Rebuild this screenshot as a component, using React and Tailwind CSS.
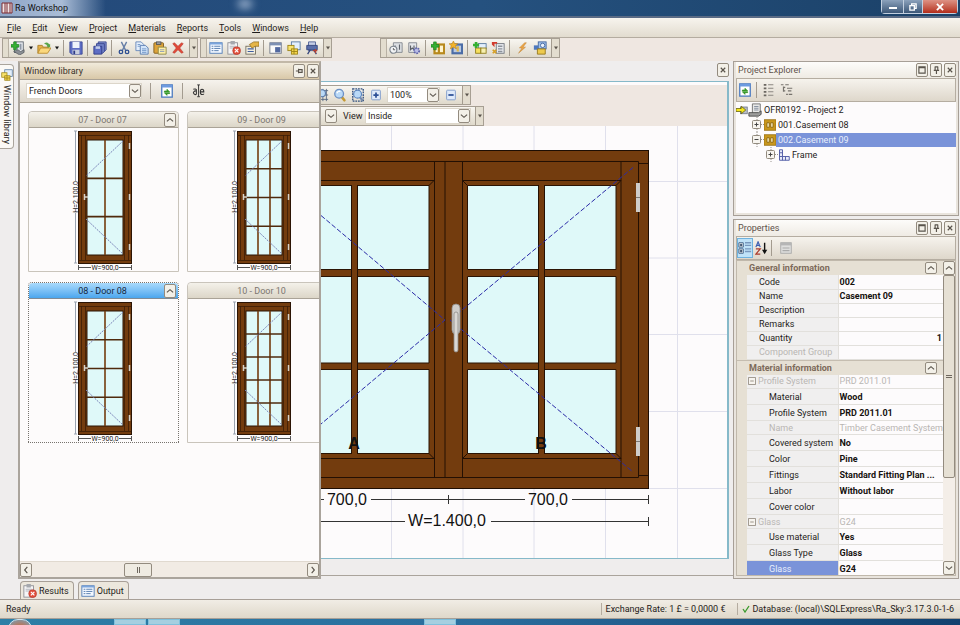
import React, { useState } from "react";

const ICONS = {
  newDoc: (
    <>
      <rect x="4" y="1" width="10" height="12" fill="#e9edf2" stroke="#59616b" />
      <path d="M6 4h2v6H6zM10 3h2v7h-2z" fill="#8e98a6" />
      <path d="M3 12l5-2 3 2 4-2v3l-5 3z" fill="#8b8f94" stroke="#484c52" strokeWidth=".7" />
      <path d="M0 4h3V1h3v3h3v3H6v3H3V7H0z" fill="#35b033" stroke="#167a1d" strokeWidth=".7" />
    </>
  ),
  open: (
    <>
      <path d="M1 14V5h5l1 2h6v3" fill="#e7b24a" stroke="#a87b21" />
      <path d="M1 14l3-6h12l-4 6z" fill="#fbd87d" stroke="#b98a2d" />
      <path d="M8 3q4-3 6 1l1-1v4h-4l1-1q-1-3-4-3z" fill="#5aa64a" />
    </>
  ),
  save: (
    <>
      <path d="M1 1h14v14H3l-2-2z" fill="#5d6dc4" stroke="#3a4796" />
      <rect x="4" y="1" width="8" height="7" fill="#eef3fb" />
      <rect x="4" y="10" width="8" height="5" fill="#c9cfdf" />
      <rect x="5" y="11" width="2" height="4" fill="#2e3a86" />
    </>
  ),
  saveAll: (
    <>
      <path d="M6 1h9v9l-2 2H6z" fill="#8191cf" stroke="#38458d" />
      <path d="M4 3h9v9l-2 2H4z" fill="#6f80c6" stroke="#38458d" />
      <path d="M1 6h9v9H1z" fill="#5d6dc4" stroke="#2e3a86" />
      <path d="M3 6h5v3H3z" fill="#c3cdea" />
    </>
  ),
  cut: (
    <>
      <path d="M5 1l5 10M11 1L6 11" stroke="#6880a8" strokeWidth="1.6" fill="none" />
      <circle cx="4.500" cy="12.500" r="2" fill="none" stroke="#2d4e91" strokeWidth="1.500" />
      <circle cx="11.500" cy="12.500" r="2" fill="none" stroke="#2d4e91" strokeWidth="1.500" />
    </>
  ),
  copy: (
    <>
      <path d="M1 1h6l3 3v7H1z" fill="#e4effc" stroke="#6485b7" />
      <path d="M6 5h6l3 3v7H6z" fill="#d3e5fa" stroke="#5577ad" />
      <path d="M8 9h5M8 11h5M8 13h5M3 4h3M3 6h3" stroke="#6d92c6" />
    </>
  ),
  paste: (
    <>
      <rect x="1" y="2" width="11" height="12" rx="1" fill="#dda43a" stroke="#7d5a1c" />
      <rect x="4" y="1" width="5" height="3" fill="#9b9da2" stroke="#55575b" />
      <path d="M6 7h9v8H6z" fill="#fff0a8" stroke="#8c8647" />
      <path d="M8 10h5M8 12h5" stroke="#8a9ab8" />
    </>
  ),
  remove: (
    <path d="M2 3l2-1 4 4 4-4 2 1-4 5 4 5-2 1-4-4-4 4-2-1 4-5z" fill="#e04a3a" stroke="#b5342a" strokeWidth=".6" />
  ),
  output: (
    <>
      <rect x="1" y="2" width="14" height="12" fill="#f3f8ff" stroke="#4a78b5" />
      <path d="M1 2h14v2H1z" fill="#7ba5dc" />
      <path d="M3 6h2M3 8.500h2M3 11h2M6 6h7M6 8.500h7M6 11h5" stroke="#4972a8" />
    </>
  ),
  results: (
    <>
      <rect x="1" y="2" width="11" height="13" fill="#f5f5f7" stroke="#8c8d93" />
      <rect x="4" y="0" width="5" height="4" fill="#a5a8ae" />
      <path d="M3 6h7M3 8h5" stroke="#a9adb6" />
      <circle cx="11" cy="11" r="4.500" fill="#e2503c" stroke="#a82b1e" strokeWidth=".6" />
      <path d="M9 9l4 4M13 9l-4 4" stroke="#fff" strokeWidth="1.300" />
    </>
  ),
  props: (
    <>
      <rect x="1" y="6" width="11" height="9" fill="#f3efe1" stroke="#716c5c" />
      <path d="M3 9h7M3 12h7" stroke="#3f5ea0" strokeWidth="1.400" />
      <path d="M5 4l5-3h6v5h-4L8 8z" fill="#e5b548" stroke="#8b6719" strokeWidth=".8" />
    </>
  ),
  panelWin: (
    <>
      <rect x="1" y="2" width="13" height="12" fill="#fbfbfb" stroke="#6e7686" />
      <path d="M1 2h13v3H1z" fill="#7d90b4" />
      <rect x="7" y="7" width="6" height="6" fill="#5269a0" />
    </>
  ),
  library: (
    <>
      <rect x="5" y="1" width="10" height="9" fill="#e3effc" stroke="#54779e" />
      <rect x="1" y="5" width="7" height="6" fill="#f9e36d" stroke="#9b8214" />
      <rect x="5" y="9" width="7" height="6" fill="#f5d64d" stroke="#9b8214" />
      <path d="M8 9v6M5 12h7" stroke="#9b8214" />
    </>
  ),
  fittings: (
    <>
      <path d="M4 1h8v10H4z" fill="#c6cfe6" stroke="#4b5f94" />
      <path d="M2 5h12v5H2z" fill="#5a6faa" stroke="#34457c" />
      <path d="M3 15l3-5M13 15l-3-5" stroke="#34457c" strokeWidth="1.500" />
      <path d="M9 11h5M12 9v5" stroke="#b54334" strokeWidth="1.500" />
    </>
  ),
  clockDoc: (
    <>
      <path d="M5 2h10v11H5z" fill="#dde0e4" stroke="#7f848b" />
      <path d="M7 5v5l2-2M12 4v6" stroke="#5c6169" fill="none" strokeWidth="1.300" />
      <circle cx="5" cy="10" r="4" fill="#f2f4f6" stroke="#7d858e" strokeWidth="1.300" />
      <path d="M5 8v2h2" stroke="#555" fill="none" />
    </>
  ),
  gearDoc: (
    <>
      <path d="M2 2h9v11H2z" fill="#e4e6e9" stroke="#7f848b" />
      <path d="M4 5v5l2-2 2 2V5" stroke="#5c6169" fill="none" strokeWidth="1.300" />
      <circle cx="11" cy="11" r="3" fill="#b9bce6" stroke="#6065a8" strokeWidth="2" strokeDasharray="2 1" />
    </>
  ),
  addWindow: (
    <>
      <rect x="4" y="4" width="11" height="10" fill="#fff4ce" stroke="#b8891c" strokeWidth="2.500" />
      <path d="M9 4v10" stroke="#b8891c" strokeWidth="2.500" />
      <path d="M0 4h3V1h3v3h3v3H6v3H3V7H0z" fill="#35b033" stroke="#167a1d" strokeWidth=".7" />
    </>
  ),
  starWindow: (
    <>
      <rect x="4" y="4" width="11" height="10" fill="#b9c9e2" stroke="#4c6da6" strokeWidth="2.500" />
      <path d="M10 6v6" stroke="#dfb64a" strokeWidth="2.500" />
      <path d="M5 0l1.500 3H10L7.500 5.500l1 3.500L5 7 1.500 9l1-3.500L0 3h3.500z" fill="#f2b42c" stroke="#b6790c" strokeWidth=".6" />
    </>
  ),
  addBlocks: (
    <>
      <rect x="6" y="3" width="9" height="6" fill="#e3effc" stroke="#54779e" />
      <rect x="3" y="8" width="6" height="6" fill="#f7e05f" stroke="#8f7b17" />
      <rect x="9" y="8" width="6" height="6" fill="#f7f0b0" stroke="#8f7b17" />
      <path d="M0 3h2V1h3v2h2v3H5v2H2V6H0z" fill="#35b033" />
    </>
  ),
  swapDoc: (
    <>
      <rect x="6" y="3" width="9" height="11" fill="#e8eaee" stroke="#6f747c" />
      <path d="M8 6h5M8 9h5M8 12h5" stroke="#8c929b" strokeWidth="1.500" />
      <path d="M1 1h6v2H4v4l-3-3z" fill="#d23a2d" />
      <path d="M2 10l4 4M6 10l-4 4" stroke="#d7a026" strokeWidth="2" />
    </>
  ),
  bolt: <path d="M11 2L5 8h3l-4 6 8-7H9l4-5z" fill="#eda646" stroke="#b87a2b" strokeWidth=".5" />,
  cubes: (
    <>
      <rect x="6" y="1" width="9" height="8" fill="#9fc0ec" stroke="#41649c" />
      <circle cx="11" cy="5" r="2.500" fill="#e9f1fb" stroke="#41649c" />
      <rect x="1" y="5" width="5" height="5" fill="#4d78be" />
      <path d="M5 9h9v6H5z" fill="#edca4d" stroke="#94761a" />
    </>
  ),
  refresh: (
    <>
      <rect x="2" y="1" width="12" height="14" fill="#fff" stroke="#4e7cc0" strokeWidth="1.500" />
      <path d="M2 1h12v3H2z" fill="#6d9be0" />
      <path d="M5 8h3V6l3 3H5zM11 11H8v2l-3-3h6z" fill="#3ca52b" stroke="#2f8f22" strokeWidth=".8" />
    </>
  ),
  zoomHash: (
    <>
      <path d="M1 3h14M1 8h14M1 13h14M4 1v14M9 1v14M13 1v14" stroke="#53657f" />
      <circle cx="8" cy="6" r="4" fill="#b9d9f7" stroke="#5c7cab" strokeWidth="1.300" />
    </>
  ),
  zoom: (
    <>
      <path d="M9 9l4 5" stroke="#c59a35" strokeWidth="3" strokeLinecap="round" />
      <circle cx="7" cy="6.500" r="5" fill="#b9d9f7" stroke="#6a8fc4" strokeWidth="1.500" />
      <path d="M4.500 6q1-3 4-2" stroke="#fff" fill="none" strokeWidth="1.500" />
    </>
  ),
  zoomArea: (
    <>
      <rect x="2" y="1" width="12" height="14" fill="none" stroke="#31507f" strokeDasharray="2 1" strokeWidth="1.500" />
      <path d="M9 9l4 5" stroke="#7389ad" strokeWidth="2.500" />
      <circle cx="7.500" cy="7" r="4.500" fill="#b9d9f7" stroke="#5a83bd" strokeWidth="1.300" />
    </>
  ),
  plusBox: (
    <>
      <rect x="3" y="2.500" width="10" height="11" rx="1" fill="#dfeafa" stroke="#7a98c9" />
      <path d="M5 8h6M8 5v6" stroke="#2c4f96" strokeWidth="2" />
    </>
  ),
  minusBox: (
    <>
      <rect x="3" y="2.500" width="10" height="11" rx="1" fill="#dfeafa" stroke="#7a98c9" />
      <path d="M5 8h6" stroke="#2c4f96" strokeWidth="2" />
    </>
  ),
  expandAll: (
    <>
      <path d="M2 2h3M2 6h3M2 10h3M2 14h3" stroke="#6b6761" strokeWidth="2" />
      <path d="M7 2h6M7 6h6M7 10h6M7 14h6" stroke="#8b8781" strokeWidth="1.400" />
    </>
  ),
  collapseAll: (
    <path d="M1 2h3M6 2h4M4 5h2M8 6h6M4 9h2M9 9h4M7 13h2M10 13h4M4 4v6" stroke="#77736d" strokeWidth="1.400" fill="none" />
  ),
  categorized: (
    <>
      <path d="M1 2h5v5H1zM1 9h5v5H1z" fill="#fff" stroke="#34557d" />
      <path d="M2 4.500h3M2 11.500h3M3.500 3v3M3.500 10v3" stroke="#16304f" strokeWidth="1.200" />
      <path d="M8 2h7M8 5h7M8 9h7M8 12h7" stroke="#7897bd" strokeWidth="1.500" />
    </>
  ),
  sort: (
    <>
      <path d="M1 7l2.500-6L6 7M2 5h3" stroke="#3d5fb2" fill="none" strokeWidth="1.400" />
      <path d="M1 9h5l-5 6h5" stroke="#ab3a2c" fill="none" strokeWidth="1.400" />
      <path d="M11 2v9" stroke="#111" strokeWidth="1.600" />
      <path d="M8 10h6l-3 5z" fill="#111" />
    </>
  ),
  pages: (
    <>
      <rect x="2" y="2" width="12" height="12" fill="#dededd" stroke="#a5a5a5" />
      <path d="M2 2h12v3H2z" fill="#b5b5b5" />
      <path d="M4 8h8M4 11h8" stroke="#aaa" strokeWidth="1.400" />
    </>
  ),
  rename: (
    <>
      <path d="M6 1h1.500M9 1H7.500v13M6 14.500h3" stroke="#222" fill="none" />
      <path d="M5 6v6M5 8.500a2 2 0 1 0 0 3M1.500 6q3-1 3.500 1M9.500 9h4q0-3-2-3t-2 3 2 3 2-1" stroke="#333" fill="none" strokeWidth="1.200" />
    </>
  ),
  casement: (
    <>
      <rect x="0" y="1" width="16" height="14" fill="#c8971d" stroke="#93690c" />
      <path d="M4 5h3v6H4zM9 5h3v6H9z" fill="#fff2c2" stroke="#7c5707" />
    </>
  ),
  frame: (
    <path d="M2 1h4v9h9v5H2zM2 5h4M2 10h4v5M10 10v5" fill="#e8ebfa" stroke="#4a55a2" strokeWidth="1.200" />
  ),
  projectNode: (
    <>
      <path d="M5 1h9v11H5z" fill="#e8e8e8" stroke="#6b6b6b" />
      <path d="M7 4h5M7 6h5M7 8h5" stroke="#7c8798" />
      <path d="M1 11h11l3-2v4l-3 2H1z" fill="#9c9c9c" stroke="#4b4b4b" />
    </>
  ),
  arrowNode: (
    <>
      <rect x="6" y="4" width="9" height="9" fill="#b9bec9" stroke="#6b7180" />
      <path d="M0 6h7V3l6 5-6 5v-3H0z" fill="#f4e51c" stroke="#5f5909" />
    </>
  ),
};

const Icon = ({ name, className = "w-3.5 h-3.5" }) => (
  <svg viewBox="0 0 16 16" className={`${className} shrink-0`} aria-hidden="true">
    {ICONS[name]}
  </svg>
);

const GLYPHS = {
  close: "M2 2l5 5M7 2L2 7",
  up: "M1 6l3.500-3L8 6",
  down: "M1 3l3.500 3L8 3",
  left: "M6 1L3 4.500 6 8",
  right: "M3 1l3 3.500L3 8",
  pin: "M3 1h4M3.500 1v4M6.500 1v4M2 5h6M5 5v4",
  pinSide: "M1 4.500h3M4 2v5M4 3h4v3H4",
  max: "M1 1h7v7H1zM1 2h7",
};

const BoxButton = ({ glyph, label, className = "w-3 h-3.5" }) => (
  <button
    aria-label={label}
    className={`${className} flex shrink-0 items-center justify-center rounded-xs border border-[#938b7f] bg-[#f3f0e8] hover:bg-white`}
  >
    <svg viewBox="0 0 9 9" className="w-2 h-2 shrink-0">
      <path d={GLYPHS[glyph]} fill="none" stroke="#5a544c" strokeWidth="1.300" />
    </svg>
  </button>
);

const Separator = () => <span className="w-0.5 h-4 shrink-0 border-l border-[#a39b8f]" />;

const Overflow = () => (
  <button
    aria-label="More buttons"
    className="w-2 shrink-0 self-stretch flex items-center justify-center border-l border-[#a39b8f] bg-[#e3ddcf]"
  >
    <svg viewBox="0 0 4 3" className="w-1 h-1">
      <path d="M0 0h4L2 3z" fill="#5a544c" />
    </svg>
  </button>
);

const Toolbar = ({ label, items }) => (
  <div
    role="toolbar"
    aria-label={label}
    className="flex h-5 items-center border border-[#a79f93] bg-linear-to-b from-[#f8f6f1] to-[#dfd9cb]"
  >
    <span className="w-1.5 shrink-0 self-stretch border-r border-[#b9b1a4] bg-[#e3ddcf]" />
    <div className="flex items-center gap-1 pl-0.5 pr-1">
      {items.map((item, index) => {
        if (item === "|") return <Separator key={index} />;
        if (item === "v")
          return (
            <svg key={index} viewBox="0 0 4 3" className="w-1 h-1">
              <path d="M0 0h4L2 3z" fill="#111" />
            </svg>
          );
        return (
          <button key={index} aria-label={item}>
            <Icon name={item} />
          </button>
        );
      })}
    </div>
    <Overflow />
  </div>
);

const Combo = ({ label, options, className }) => (
  <div className={`${className} flex h-4 items-center border border-[#dcd6ca] bg-white`}>
    <select
      aria-label={label}
      className="h-full min-w-0 flex-1 appearance-none bg-transparent pl-0.5 leading-3 outline-none"
    >
      {options.map((option) => (
        <option key={option}>{option}</option>
      ))}
    </select>
    <span className="pointer-events-none flex h-3.5 w-3 items-center justify-center rounded-xs border border-[#938b7f] bg-[#f3f0e8]">
      <svg viewBox="0 0 9 9" className="h-2 w-2 shrink-0">
        <path d={GLYPHS.down} fill="none" stroke="#5a544c" strokeWidth="1.300" />
      </svg>
    </span>
  </div>
);

const PanelTitle = ({ children }) => (
  <div className="flex h-4 items-center gap-0.5 bg-linear-to-b from-[#fdfcfa] to-[#efebe4] pl-0.5 text-[#5f5149]">
    <h2 className="flex-1">{children}</h2>
    <BoxButton glyph="max" label="Maximize" />
    <BoxButton glyph="pin" label="Pin" />
    <BoxButton glyph="close" label="Close" />
  </div>
);

// Small preview of a door with its height and width dimensions
const DoorPreview = ({ cols, rows }) => {
  const colWidth = 36 / cols;
  const rowHeight = 115 / rows;
  const vertical = Array.from({ length: cols - 1 }, (_, i) => 15 + colWidth * (i + 1));
  const horizontal = Array.from({ length: rows - 1 }, (_, i) => 10 + rowHeight * (i + 1));
  return (
    <svg width="60" height="141" className="mr-1">
      <rect x="6.500" y="1.500" width="53" height="132" fill="#733c0e" stroke="#2b1404" />
      <path d="M6 5.500h53M6 130.500h53M9.500 5v125M13.500 5v125M52.500 5v125M56.500 5v125" stroke="#3c1d06" strokeWidth=".8" />
      <rect x="15" y="10" width="36" height="115" fill="#dff9f9" stroke="#2b1404" />
      {vertical.map((x) => (
        <path key={x} d={`M${x} 10v115`} stroke="#733c0e" strokeWidth="1.600" />
      ))}
      {horizontal.map((y) => (
        <path key={y} d={`M15 ${y}h36`} stroke="#4f2a0d" strokeWidth="1.600" />
      ))}
      <path d="M51 11L14 46M14 89l37 35" stroke="#7a83b8" strokeDasharray="2 1" />
      <path d="M57.500 13v6M57.500 64v6M57.500 114v6M12.500 64v6M12 67h4" stroke="#d8d2c8" strokeWidth="1.500" />
      <path d="M3.500 1v50M3.500 83v50M2 1h3M2 133h3" stroke="#9aa3b0" />
      <path d="M7 137.500h12M47 137.500h12M6.500 135v5M59.500 135v5" stroke="#555" />
      <text x="33" y="140" fontSize="7" textAnchor="middle" fill="#222">
        W=900,0
      </text>
      <text transform="translate(6 67) rotate(-90)" fontSize="7" textAnchor="middle" fill="#222">
        H=2.100,0
      </text>
    </svg>
  );
};

const DOORS = [
  { id: "07 - Door 07", cols: 2, rows: 3 },
  { id: "09 - Door 09", cols: 3, rows: 4 },
  { id: "08 - Door 08", cols: 2, rows: 4 },
  { id: "10 - Door 10", cols: 3, rows: 5 },
];

const DoorCard = ({ door, selected, onSelect }) => (
  <div
    onClick={onSelect}
    className={
      selected
        ? "rounded-t-sm border border-dotted border-[#77736d]"
        : "rounded-t-sm border border-[#c9c4bb]"
    }
  >
    <div
      className={
        selected
          ? "flex h-4 items-center rounded-t-sm border-b border-[#7f8b96] bg-linear-to-b from-[#a9dafc] to-[#4aa6ee] pl-3 text-[#16283f]"
          : "flex h-4 items-center rounded-t-sm border-b border-[#aaa397] bg-linear-to-b from-[#f4f1ea] to-[#dcd6c8] pl-3 text-[#7c7670]"
      }
    >
      <h3 className="flex-1 text-center">{door.id}</h3>
      <BoxButton glyph="up" label="Collapse" className="w-3 h-3.5 mr-0.5" />
    </div>
    <div className="flex justify-center pt-0.5">
      <DoorPreview cols={door.cols} rows={door.rows} />
    </div>
  </div>
);

const WindowLibrary = () => {
  const [selected, setSelected] = useState("08 - Door 08");
  return (
    <section className="flex w-[303px] shrink-0 flex-col border-2 border-[#aaa49c] border-t-[#c2b8a8] bg-[#fdfbfb]">
      <div className="flex h-4 items-center gap-0.5 bg-linear-to-b from-[#f1eadb] to-[#d9c8a8] pl-1 text-[#3a322a]">
        <h2 className="flex-1">Window library</h2>
        <BoxButton glyph="pinSide" label="Pin" />
        <BoxButton glyph="close" label="Close" />
      </div>
      <div className="flex h-6 items-center gap-2 border-y border-[#aaa295] bg-linear-to-b from-[#f6f3ed] to-[#ded7cb] px-1.5">
        <Combo label="Library" options={["French Doors"]} className="w-[116px]" />
        <Separator />
        <button aria-label="Refresh">
          <Icon name="refresh" />
        </button>
        <Separator />
        <button aria-label="Rename">
          <Icon name="rename" />
        </button>
      </div>
      <div className="min-h-0 flex-1 overflow-hidden pl-2 pt-2">
        <div className="grid w-[310px] grid-cols-2 gap-x-2 gap-y-2.5">
          {DOORS.map((door) => (
            <DoorCard
              key={door.id}
              door={door}
              selected={selected === door.id}
              onSelect={() => setSelected(door.id)}
            />
          ))}
        </div>
      </div>
      <div className="flex h-4 items-center border-t border-[#e0d9cf] bg-[#f1ebe4]">
        <BoxButton glyph="left" label="Scroll left" />
        <div className="flex flex-1 pl-[92px]">
          <span className="flex h-3.5 w-7 items-center justify-center gap-px rounded-xs border border-[#938b7f] bg-[#efebe2]">
            <i className="h-1.5 w-px bg-[#6f685f]" />
            <i className="h-1.5 w-px bg-[#6f685f]" />
          </span>
        </div>
        <BoxButton glyph="right" label="Scroll right" />
      </div>
    </section>
  );
};

const Dimension = ({ d }) => <path d={d} stroke="#333" fill="none" />;

const Drawing = () => (
  <svg className="h-full w-full" role="img" aria-label="Casement 09">
    <g transform="translate(-321 -126)">
      <path
        d="M391.500 126v432M463 126v432M534 126v432M605.500 126v432M677.500 126v432M321 181.500h407M321 258h407M321 334.500h407M321 411.500h407M321 488.500h407"
        stroke="#e0e0ec"
      />
      <rect x="310" y="150.500" width="338.500" height="338" fill="#733c0e" stroke="#1e0e03" />
      <g fill="#dff9f9" stroke="#2b1404">
        <path d="M310 185.500h41.500v84H310zM357.500 185.500H429v84h-71.500zM467.500 185.500h71v84h-71zM544.500 185.500H616v84h-71.500z" />
        <path d="M310 276.500h41.500V363H310zM357.500 276.500H429V363h-71.500zM467.500 276.500h71V363h-71zM544.500 276.500H616V363h-71.500z" />
        <path d="M310 369.500h41.500v84H310zM357.500 369.500H429v84h-71.500zM467.500 369.500h71v84h-71zM544.500 369.500H616v84h-71.500z" />
      </g>
      <path
        d="M310 161.500h328.500M310 477.500h328.500M310 180.500h124M310 458.500h124M462.500 180.500H621M462.500 458.500H621M434.500 161.500v316M445 161.500v316M462.500 161.500v316M621 161.500v316M638.500 161.500v316M638.500 163.500h10M638.500 475.500h10M429 185.500l5-5M429 453.500l5 5M467.500 185.500l-5-5M467.500 453.500l-5 5M616 185.500l5-5M616 453.500l5 5M351.500 185v269M357.500 185v269M538.500 185v269M544.500 185v269"
        stroke="#241003"
        fill="none"
      />
      <path d="M633 167.500L450 320l183 152M321 215.500L445 320 321 424" stroke="#2b2ba8" strokeDasharray="5 2" fill="none" />
      <rect x="452" y="304" width="8" height="30" rx="4" fill="#cfcdca" stroke="#8d8a86" strokeWidth=".8" />
      <rect x="454" y="312" width="4" height="40" rx="2" fill="#dad8d5" stroke="#8d8a86" strokeWidth=".8" />
      <path d="M638 183v29M638 427v29" stroke="#cfcdca" strokeWidth="4" />
      <path d="M636 197.500h4M636 441.500h4" stroke="#7d7975" />
      <g fontSize="16" fill="#111" textAnchor="middle" fontFamily="Liberation Sans, sans-serif">
        <text x="354" y="449" fontWeight="bold">
          A
        </text>
        <text x="541" y="449" fontWeight="bold">
          B
        </text>
        <text x="347" y="505">
          700,0
        </text>
        <text x="548" y="505">
          700,0
        </text>
        <text x="447" y="526">
          W=1.400,0
        </text>
      </g>
      <Dimension d="M321 499.500h3M371 499.500h154M572 499.500h77M448.500 495v9M648.500 495v9" />
      <Dimension d="M321 521.500h84M491 521.500h158M648.500 517v9" />
    </g>
  </svg>
);

const Workspace = () => (
  <main className="flex min-w-0 flex-1 flex-col border-b border-[#aaa49c] mb-[3px]">
    <div className="flex h-5 shrink-0 items-start justify-end bg-[#efeded] px-1 pt-0.5">
      <BoxButton glyph="close" label="Close document" />
    </div>
    <div className="mr-1 mb-4 flex min-h-0 flex-1 flex-col border-y border-r-2 border-[#86b9c9] bg-[#fdfbfc]">
      <div className="mt-[3px] flex shrink-0 flex-col items-start bg-[#efe7e1]">
        <div className="flex h-5 items-center gap-1 border border-l-0 border-[#a79f93] bg-linear-to-b from-[#f8f6f1] to-[#dfd9cb]">
          <button aria-label="Fit" className="flex w-2 justify-end overflow-hidden">
            <Icon name="zoomHash" />
          </button>
          <button aria-label="Zoom">
            <Icon name="zoom" />
          </button>
          <button aria-label="Zoom area">
            <Icon name="zoomArea" />
          </button>
          <button aria-label="Zoom in">
            <Icon name="plusBox" />
          </button>
          <Combo label="Zoom level" options={["100%"]} className="w-[53px]" />
          <button aria-label="Zoom out">
            <Icon name="minusBox" />
          </button>
          <Overflow />
        </div>
        <div className="mt-px flex h-5 items-center gap-1 border border-l-0 border-[#a79f93] bg-linear-to-b from-[#f8f6f1] to-[#dfd9cb]">
          <BoxButton glyph="down" label="Open list" className="ml-1 w-3 h-3.5" />
          <span className="w-5 pl-0.5">View</span>
          <Combo label="View" options={["Inside"]} className="w-[106px]" />
          <Overflow />
        </div>
      </div>
      <div className="min-h-0 flex-1">
        <Drawing />
      </div>
    </div>
  </main>
);

const TreeToggle = ({ open }) => (
  <svg viewBox="0 0 14 15" className="h-[15px] w-3.5 shrink-0">
    <path d="M7 0v15M7 7.500h7" stroke="#9a958f" strokeDasharray="1 1" />
    <rect x="2.500" y="3.500" width="8" height="8" rx="1" fill="#f7f4ef" stroke="#938b7f" />
    <path d={open ? "M4.500 7.500h4" : "M4.500 7.500h4M6.500 5.500v4"} stroke="#444" />
  </svg>
);

const ProjectExplorer = () => (
  <section className="flex h-[155px] shrink-0 flex-col border border-[#a79f97] bg-[#e9e4dd] p-0.5 pt-0">
    <PanelTitle>Project Explorer</PanelTitle>
    <div className="flex h-6 shrink-0 items-center gap-1 border border-[#b5ada1] bg-linear-to-b from-[#f6f3ed] to-[#ded7cb] px-px">
      <button aria-label="Refresh">
        <Icon name="refresh" />
      </button>
      <Separator />
      <button aria-label="Expand all">
        <Icon name="expandAll" />
      </button>
      <button aria-label="Collapse all">
        <Icon name="collapseAll" />
      </button>
    </div>
    <ul className="flex-1 bg-[#fdfbfc] text-[#1f1c1a]">
      <li className="flex h-[15px] items-center">
        <Icon name="arrowNode" className="h-3.5 w-3" />
        <Icon name="projectNode" />
        <span className="pl-0.5">OFR0192 - Project 2</span>
      </li>
      <li className="flex h-[15px] items-center pl-3.5">
        <TreeToggle />
        <Icon name="casement" className="h-3.5 w-3" />
        <span className="pl-0.5">001.Casement 08</span>
      </li>
      <li className="flex h-[15px] items-center pl-3.5">
        <TreeToggle open />
        <Icon name="casement" className="h-3.5 w-3" />
        <span className="flex-1 bg-[#7a93d9] pl-0.5 leading-[14px] text-[#e9effc]">002.Casement 09</span>
      </li>
      <li className="flex h-[15px] items-center pl-7">
        <TreeToggle />
        <Icon name="frame" className="h-3.5 w-3" />
        <span className="pl-0.5">Frame</span>
      </li>
    </ul>
  </section>
);

const GENERAL = [
  ["Code", "002"],
  ["Name", "Casement 09"],
  ["Description", ""],
  ["Remarks", ""],
  ["Quantity", "1", "right"],
  ["Component Group", "", "muted"],
];

const MATERIAL = [
  ["Profile System", "PRD 2011.01", "group"],
  ["Material", "Wood"],
  ["Profile System", "PRD 2011.01"],
  ["Name", "Timber Casement System", "muted"],
  ["Covered system", "No"],
  ["Color", "Pine"],
  ["Fittings", "Standard Fitting Plan ..."],
  ["Labor", "Without labor"],
  ["Cover color", ""],
  ["Glass", "G24", "group"],
  ["Use material", "Yes"],
  ["Glass Type", "Glass"],
  ["Glass", "G24", "selected"],
];

const PropertyGroup = ({ title, rows, nested }) => (
  <div className="border-b border-[#c5bdb0]">
    <div className="flex h-3.5 items-center pl-3 pr-1.5">
      <h3 className="flex-1 font-bold text-[#7c6a5a]">{title}</h3>
      <BoxButton glyph="up" label="Collapse" className="w-3 h-3" />
    </div>
    <div className="pl-2.5">
      <table className="w-full table-fixed border-collapse">
        <tbody>
          {rows.map(([name, value, kind], index) => {
            const faded = kind === "muted" || kind === "group";
            const tall = nested && !faded;
            return (
              <tr key={index} className={tall ? "h-4" : "h-3.5"}>
                <th
                  scope="row"
                  className={`w-[91px] whitespace-nowrap border-b border-[#e2e0dc] p-0 text-left font-normal leading-3 ${
                    kind === "selected"
                      ? "bg-[#7a93d9] text-[#e9effc]"
                      : faded
                        ? "bg-[#f0efef] text-[#b9b6b3]"
                        : "bg-[#f0efef] text-[#1f1c1a]"
                  }`}
                >
                  {kind === "group" ? (
                    <span className="flex items-center gap-0.5 pl-px">
                      <svg viewBox="0 0 9 9" className="h-2 w-2">
                        <path d="M.5.5h8v8h-8zM2.500 4.500h4" fill="#f7f4ef" stroke="#938b7f" />
                      </svg>
                      {name}
                    </span>
                  ) : (
                    <span className={nested ? "pl-[22px]" : "pl-3"}>{name}</span>
                  )}
                </th>
                <td
                  className={`whitespace-nowrap border-b border-l border-[#e2e0dc] bg-[#fdfbfc] p-0 px-px leading-3 ${
                    faded ? "text-[#b9b6b3]" : "font-bold text-[#16120f]"
                  } ${kind === "right" ? "text-right" : ""}`}
                >
                  {value}
                </td>
              </tr>
            );
          })}
        </tbody>
      </table>
    </div>
  </div>
);

const Properties = () => (
  <section className="flex min-h-0 flex-1 flex-col border border-[#a79f97] bg-[#e9e4dd] p-0.5 pt-0">
    <PanelTitle>Properties</PanelTitle>
    <div className="flex h-6 shrink-0 items-center gap-0.5 border border-[#b5ada1] bg-linear-to-b from-[#f6f3ed] to-[#ded7cb]">
      <button aria-label="Categorized" className="border border-[#6fb2de] bg-[#bfe2f8] py-0.5">
        <Icon name="categorized" />
      </button>
      <button aria-label="Alphabetical">
        <Icon name="sort" />
      </button>
      <Separator />
      <button aria-label="Property pages" className="pl-1">
        <Icon name="pages" />
      </button>
    </div>
    <div className="flex min-h-0 flex-1 border border-[#c0b8ab]">
      <div className="min-w-0 flex-1 overflow-hidden bg-[#e6e0d4]">
        <PropertyGroup title="General information" rows={GENERAL} />
        <PropertyGroup title="Material information" rows={MATERIAL} nested />
      </div>
      <div className="flex w-3 flex-col items-center bg-[#f4eee8]">
        <BoxButton glyph="up" label="Scroll up" />
        <div className="flex min-h-0 w-3 flex-1 flex-col">
          <span className="flex basis-[71%] flex-col items-center justify-center gap-px rounded-xs border border-[#938b7f] bg-[#e6e0d4]">
            <i className="h-px w-1.5 bg-[#6f685f]" />
            <i className="h-px w-1.5 bg-[#6f685f]" />
          </span>
        </div>
        <BoxButton glyph="down" label="Scroll down" />
      </div>
    </div>
  </section>
);

const TitleBar = () => (
  <header className="flex h-[18px] shrink-0 items-start justify-between border-b-2 border-[#5a6b85] bg-linear-to-r from-[#24497a] via-[#25517f] to-[#1b4168]">
    <div className="flex h-full flex-1 items-center gap-0.5 bg-linear-to-r from-[#8fa6c8] via-[#a9bcd6] via-7% to-transparent to-12% pl-px text-[#111]">
      <svg viewBox="0 0 12 12" className="h-3 w-3">
        <path d="M1 1h10v10H1z" fill="#f2e6e6" stroke="#7b2b32" />
        <path d="M4 1v10M6 1v10M9 1v10" stroke="#7b2b32" />
      </svg>
      <h1>Ra Workshop</h1>
      <span className="ml-[168px] h-2 w-3.5 self-start rounded-full bg-[#a9bcd6] blur-xs" />
    </div>
    <div className="mr-0.5 flex h-3.5 rounded-b-sm border border-t-0 border-[#c2cfdf] text-white">
      <button aria-label="Minimize" className="flex w-[21px] items-end justify-center bg-linear-to-b from-[#8ba1bb] to-[#3d5878] pb-1">
        <span className="h-0.5 w-2 bg-white" />
      </button>
      <button aria-label="Restore" className="flex w-5 items-center justify-center border-x border-[#c2cfdf] bg-linear-to-b from-[#8ba1bb] to-[#3d5878]">
        <svg viewBox="0 0 9 9" className="h-2 w-2">
          <path d="M3 3V1h5v5H6M1 3h5v5H1z" fill="none" stroke="#fff" strokeWidth="1.500" />
        </svg>
      </button>
      <button aria-label="Close" className="flex w-[34px] items-center justify-center bg-linear-to-b from-[#dd9184] to-[#b32a18]">
        <svg viewBox="0 0 9 9" className="h-2 w-2">
          <path d="M1 1l7 7M8 1L1 8" stroke="#fff" strokeWidth="2" />
        </svg>
      </button>
    </div>
  </header>
);

const MENU = ["File", "Edit", "View", "Project", "Materials", "Reports", "Tools", "Windows", "Help"];

const App = () => {
  return (
    <div className="flex h-screen w-full flex-col overflow-hidden bg-[#efeded] font-[Roboto,'Liberation_Sans',sans-serif] text-[9px] leading-3 text-[#1f1c1a]">
      <TitleBar />
      <nav className="flex h-5 shrink-0 items-center gap-[11px] border-b border-[#b4aca0] bg-linear-to-b from-[#f7f4ee] to-[#e2dccf] px-[7px]">
        {MENU.map((item) => (
          <button key={item}>
            <span className="underline">{item[0]}</span>
            {item.slice(1)}
          </button>
        ))}
      </nav>
      <div className="flex h-[23px] shrink-0 items-start gap-0.5 bg-[#efe7e1] pl-0.5">
        <Toolbar
          label="Standard"
          items={["newDoc", "v", "open", "v", "|", "save", "|", "saveAll", "|", "cut", "copy", "paste", "remove"]}
        />
        <Toolbar label="Panels" items={["output", "results", "props", "|", "panelWin", "library", "fittings"]} />
        <div className="pl-[46px]">
          <Toolbar
            label="Items"
            items={["clockDoc", "gearDoc", "|", "addWindow", "starWindow", "|", "addBlocks", "swapDoc", "|", "bolt", "cubes"]}
          />
        </div>
      </div>
      <div className="flex min-h-0 flex-1">
        <aside className="w-[18px] shrink-0 pt-[3px]">
          <button className="flex w-3.5 flex-col items-center gap-1 rounded-r-sm border border-l-0 border-[#aaa49c] bg-[#fbf9f6] py-1">
            <Icon name="library" className="h-3 w-3" />
            <span className="[writing-mode:vertical-rl]">Window library</span>
          </button>
        </aside>
        <WindowLibrary />
        <Workspace />
        <aside className="flex w-[227px] shrink-0 flex-col gap-[3px] pr-px">
          <ProjectExplorer />
          <Properties />
        </aside>
      </div>
      <div className="flex h-5 shrink-0 items-end gap-1 pl-5">
        <button className="flex h-[18px] items-center gap-0.5 rounded-t-sm border border-b-0 border-[#a79f97] bg-[#ece7dd] pl-0.5 pr-1">
          <Icon name="results" />
          Results
        </button>
        <button className="flex h-[18px] items-center gap-0.5 rounded-t-sm border border-b-0 border-[#a79f97] bg-[#ece7dd] pl-0.5 pr-1">
          <Icon name="output" />
          Output
        </button>
      </div>
      <footer className="flex h-5 shrink-0 items-center border-y border-[#a79f97] bg-linear-to-b from-[#f1ede5] to-[#dfd8ca]">
        <span className="flex-1 pl-1.5">Ready</span>
        <span className="border-l border-[#b4aca0] pl-1 pr-3">Exchange Rate: 1 £ = 0,0000 €</span>
        <span className="flex items-center gap-0.5 border-l border-[#b4aca0] pl-1 pr-1.5">
          <svg viewBox="0 0 8 8" className="h-2 w-2">
            <path d="M1 4l2 3 4-6" fill="none" stroke="#3a9a2c" strokeWidth="1.300" />
          </svg>
          Database: (local)\SQLExpress\Ra_Sky:3.17.3.0-1-6
        </span>
      </footer>
      <div className="flex h-1.5 shrink-0 items-start overflow-hidden bg-linear-to-r from-[#2d7fa6] via-[#2a6d9d] to-[#12416f] pl-2">
        <span className="h-5 w-6 rounded-full border border-[#cfe3ef] bg-[radial-gradient(#d9622b,#6aa6c9)]" />
        <span className="ml-[82px] h-1.5 w-8 border border-[#7fc0dc] bg-[#a5cfe0]" />
        <span className="ml-0.5 h-1.5 w-8 border border-[#7fc0dc] bg-[#a5cfe0]" />
        <span className="ml-[244px] h-1.5 w-8 border border-[#7fc0dc] bg-[#a5cfe0]" />
      </div>
    </div>
  );
};

export default App;
